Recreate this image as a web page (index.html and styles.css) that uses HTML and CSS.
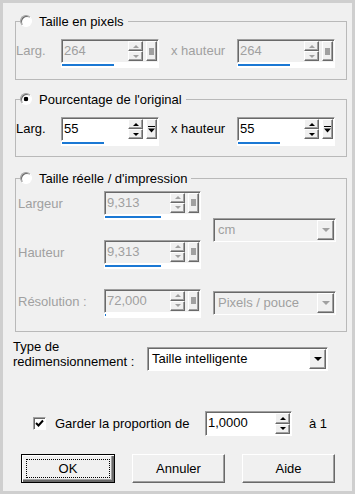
FILE: index.html
```html
<!DOCTYPE html>
<html lang="fr">
<head>
  <meta charset="UTF-8">
  <title>Redimensionner</title>
  <link rel="stylesheet" href="styles.css">
</head>
<body>
  <div class="dialog">
    <fieldset class="group g1">
      <legend><span class="radio"></span>Taille en pixels</legend>
      <div class="row">
        <span class="lbl dis">Larg.</span>
        <div class="spin off">
          <div class="box"><span class="val">264</span><span class="arrows"><b class="up"></b><b class="dn"></b></span><span class="pop"><i class="sq"></i></span></div>
          <div class="track"><i style="width:52px"></i></div>
        </div>
        <span class="mid dis">x hauteur</span>
        <div class="spin off">
          <div class="box"><span class="val">264</span><span class="arrows"><b class="up"></b><b class="dn"></b></span><span class="pop"><i class="sq"></i></span></div>
          <div class="track"><i style="width:52px"></i></div>
        </div>
      </div>
    </fieldset>

    <fieldset class="group g2">
      <legend><span class="radio on"></span>Pourcentage de l'original</legend>
      <div class="row">
        <span class="lbl">Larg.</span>
        <div class="spin">
          <div class="box"><span class="val">55</span><span class="arrows"><b class="up"></b><b class="dn"></b></span><span class="pop"><svg width="7" height="7" viewBox="0 0 7 7"><rect x="0" y="0" width="7" height="1" fill="#000"/><path d="M0 2.5h7L3.5 6.5z" fill="#000"/></svg></span></div>
          <div class="track"><i style="width:42px"></i></div>
        </div>
        <span class="mid">x hauteur</span>
        <div class="spin">
          <div class="box"><span class="val">55</span><span class="arrows"><b class="up"></b><b class="dn"></b></span><span class="pop"><svg width="7" height="7" viewBox="0 0 7 7"><rect x="0" y="0" width="7" height="1" fill="#000"/><path d="M0 2.5h7L3.5 6.5z" fill="#000"/></svg></span></div>
          <div class="track"><i style="width:42px"></i></div>
        </div>
      </div>
    </fieldset>

    <fieldset class="group g3">
      <legend><span class="radio"></span>Taille réelle / d'impression</legend>
      <div class="grid3">
        <span class="lbl3 dis">Largeur</span>
        <div class="spin off">
          <div class="box"><span class="val">9,313</span><span class="arrows"><b class="up"></b><b class="dn"></b></span><span class="pop"><i class="sq"></i></span></div>
          <div class="track"><i style="width:56px"></i></div>
        </div>
        <div class="combo off unit"><span class="txt">cm</span><span class="btn"></span></div>

        <span class="lbl3 dis">Hauteur</span>
        <div class="spin off">
          <div class="box"><span class="val">9,313</span><span class="arrows"><b class="up"></b><b class="dn"></b></span><span class="pop"><i class="sq"></i></span></div>
          <div class="track"><i style="width:56px"></i></div>
        </div>

        <span class="lbl3 dis">Résolution :</span>
        <div class="spin off">
          <div class="box"><span class="val">72,000</span><span class="arrows"><b class="up"></b><b class="dn"></b></span><span class="pop"><i class="sq"></i></span></div>
          <div class="track"><i style="width:1px"></i></div>
        </div>
        <div class="combo off"><span class="txt">Pixels / pouce</span><span class="btn"></span></div>
      </div>
    </fieldset>

    <div class="type-row">
      <span class="type-lbl">Type de<br>redimensionnement :</span>
      <div class="combo wide"><span class="txt">Taille intelligente</span><span class="btn"></span></div>
    </div>

    <div class="keep-row">
      <span class="check"><svg width="9" height="9" viewBox="0 0 9 9"><path d="M1 4l2.5 2.5L8 1.5" fill="none" stroke="#000" stroke-width="2"/></svg></span>
      <span class="keep-lbl">Garder la proportion de</span>
      <div class="ratio"><span class="val">1,0000</span><span class="arrows"><b class="up"></b><b class="dn"></b></span></div>
      <span class="to-one">à 1</span>
    </div>

    <div class="buttons">
      <button class="btn-ok"><span>OK</span></button>
      <button>Annuler</button>
      <button>Aide</button>
    </div>
  </div>
</body>
</html>
```

FILE: styles.css
```css
* {
  box-sizing: border-box;
}

body {
  margin: 0;
  background: #cfcfcf;
  font: 13px "Liberation Sans", Arial, sans-serif;
  color: #000;
}

.dialog {
  margin: 3px;
  width: 349px;
  height: 488px;
  background: #f0f0f0;
  padding-top: 10px;
}

.dis {
  color: #a0a0a0;
}

/* group boxes */
.group {
  margin: 0 0 0 12px;
  width: 332px;
  min-width: 0;
  padding: 0;
  border: 1px solid #b9b9b9;
}

.g2 {
  margin-top: 11px;
}

.g3 {
  margin-top: 13px;
}

.group legend {
  display: flex;
  align-items: center;
  gap: 7px;
  height: 16px;
  margin-left: 4px;
  padding: 0 4px 0 0;
}

.radio {
  width: 12px;
  height: 12px;
  border-radius: 50%;
  border: 1px solid;
  border-color: #a0a0a0 #fff #fff #a0a0a0;
  background: #fff;
  box-shadow: inset 1px 1px 0 #696969;
}

.radio.on {
  background: radial-gradient(circle, #000 2px, #fff 2.6px);
}

.row {
  display: flex;
  align-items: flex-start;
  margin: 10px 0 11px 0;
}

.g2 .row {
  margin-bottom: 10px;
}

.lbl {
  width: 45px;
  line-height: 24px;
}

.mid {
  width: 78px;
  padding-left: 12px;
  line-height: 24px;
}

/* numeric field with slider */
.spin {
  width: 98px;
}

.grid3 .spin {
  width: 97px;
}

.spin .box {
  display: flex;
  height: 24px;
  padding: 1px;
  border: 1px solid;
  border-color: #a0a0a0 #fff #fff #a0a0a0;
  box-shadow: inset 1px 1px 0 #696969;
  background: #fff;
}

.spin.off .box {
  background: #f0f0f0;
}

.val {
  flex: 1;
  padding: 0 0 0 1px;
  line-height: 20px;
}

.off .val {
  color: #a0a0a0;
}

.arrows {
  display: flex;
  flex-direction: column;
  width: 15px;
  margin-right: 3px;
}

.arrows b,
.pop,
.combo .btn {
  display: flex;
  align-items: center;
  justify-content: center;
  border: 1px solid;
  border-color: #fff #696969 #696969 #fff;
  box-shadow: inset -1px -1px 0 #a0a0a0;
  background: #f0f0f0;
}

.arrows b {
  flex: 1;
}

.arrows .up::after,
.arrows .dn::after {
  content: "";
  border-left: 3px solid transparent;
  border-right: 3px solid transparent;
}

.arrows .up::after {
  border-bottom: 3px solid #000;
}

.arrows .dn::after {
  border-top: 3px solid #000;
}

.off .arrows .up::after {
  border-bottom-color: #a0a0a0;
}

.off .arrows .dn::after {
  border-top-color: #a0a0a0;
}

.pop {
  width: 11px;
}

.pop .sq {
  width: 5px;
  height: 7px;
  background: #a0a0a0;
}

.track {
  height: 5px;
  padding: 1px 1px 0;
  background: #fff;
}

.track i {
  display: block;
  height: 2px;
  background: #1a78d4;
}

/* real size group */
.grid3 {
  display: grid;
  grid-template-columns: 76px 97px 123px;
  grid-template-rows: 28px 28px 28px;
  column-gap: 12px;
  row-gap: 21px;
  align-items: center;
  margin: 5px 0 14px 0;
}

.lbl3 {
  align-self: start;
  padding-left: 2px;
  line-height: 26px;
  white-space: nowrap;
}

.unit {
  grid-column: 3;
  grid-row: 1 / span 2;
}

/* combo boxes */
.combo {
  display: flex;
  height: 24px;
  padding: 1px;
  border: 1px solid;
  border-color: #a0a0a0 #fff #fff #a0a0a0;
  box-shadow: inset 1px 1px 0 #696969;
  background: #fff;
}

.combo.off {
  background: #f0f0f0;
  color: #a0a0a0;
}

.combo .txt {
  flex: 1;
  padding-left: 3px;
  line-height: 20px;
  white-space: nowrap;
}

.combo .btn {
  width: 17px;
}

.combo .btn::after {
  content: "";
  border-left: 4px solid transparent;
  border-right: 4px solid transparent;
  border-top: 4px solid #000;
}

.combo.off .btn::after {
  border-top-color: #a0a0a0;
}

/* resize type */
.type-row {
  display: flex;
  margin: 7px 0 0 10px;
}

.type-lbl {
  width: 134px;
  line-height: 15px;
}

.combo.wide {
  width: 181px;
  margin-top: 8px;
}

/* keep ratio */
.keep-row {
  display: flex;
  align-items: center;
  margin: 40px 0 0 30px;
}

.check {
  display: flex;
  align-items: center;
  justify-content: center;
  width: 13px;
  height: 13px;
  border: 1px solid;
  border-color: #a0a0a0 #fff #fff #a0a0a0;
  box-shadow: inset 1px 1px 0 #696969;
  background: #fff;
}

.keep-lbl {
  width: 159px;
  padding-left: 9px;
}

.ratio {
  display: flex;
  width: 87px;
  height: 25px;
  padding: 1px 1px 1px 1px;
  border: 1px solid;
  border-color: #a0a0a0 #fff #fff #a0a0a0;
  box-shadow: inset 1px 1px 0 #696969;
  background: #fff;
}

.ratio .arrows {
  margin-right: 0;
}

.to-one {
  margin-left: 17px;
}

/* buttons */
.buttons {
  display: flex;
  gap: 17px;
  margin: 18px 0 0 18px;
}

.buttons button {
  width: 93px;
  height: 29px;
  padding: 0;
  font: 13px "Liberation Sans", Arial, sans-serif;
  color: #000;
  border: 1px solid;
  border-color: #fff #696969 #696969 #fff;
  box-shadow: inset -1px -1px 0 #a0a0a0;
  background: #f0f0f0;
}

.buttons .btn-ok {
  width: 94px;
  border: 1px solid #000;
  box-shadow: inset 1px 1px 0 #fff, inset -2px -2px 0 #696969, inset -3px -3px 0 #a0a0a0;
  padding: 4px;
}

.btn-ok span {
  display: flex;
  align-items: center;
  justify-content: center;
  height: 100%;
  border: 1px dotted #000;
}
```
